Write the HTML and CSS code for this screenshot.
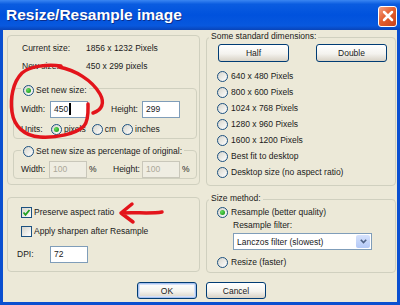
FILE: index.html
```html
<!DOCTYPE html>
<html lang="en">

<head>
    <meta charset="UTF-8">
    <meta name="viewport" content="width=device-width, initial-scale=1.0">
    <title>Resize/Resample image</title>
    <link rel="stylesheet" href="styles.css">
</head>

<body>
    <div class="window">
        <div class="title-bar">
            <span class="title">Resize/Resample image</span>
            <button class="close-btn">
                <svg width="12" height="12" viewBox="0 0 12 12"><path d="M2 2 L10 10 M10 2 L2 10" stroke="#fff" stroke-width="2.5" stroke-linecap="round"/></svg>
            </button>
        </div>

        <div class="client">
            <div class="columns">
                <div class="col-left">
                    <div class="group size-group">
                        <div class="info">
                            <span>Current size:</span><span>1856 x 1232 Pixels</span>
                            <span>New size:</span><span>450 x 299 pixels</span>
                        </div>

                        <fieldset class="sub new-size">
                            <legend><span class="radio checked"></span>Set new size:</legend>
                            <div class="field-row">
                                <span class="lbl-width">Width:</span>
                                <span class="field">450<span class="caret"></span></span>
                                <span class="lbl-height">Height:</span>
                                <span class="field">299</span>
                            </div>
                            <div class="units-row">
                                <span class="lbl-units">Units:</span>
                                <span class="opt"><span class="radio checked"></span>pixels</span>
                                <span class="opt"><span class="radio"></span>cm</span>
                                <span class="opt"><span class="radio"></span>inches</span>
                            </div>
                        </fieldset>

                        <fieldset class="sub percent">
                            <legend><span class="radio"></span>Set new size as percentage of original:</legend>
                            <div class="field-row">
                                <span class="lbl-width pct-width">Width:</span>
                                <span class="field disabled">100</span>
                                <span class="pct">%</span>
                                <span class="lbl-height pct-height">Height:</span>
                                <span class="field disabled">100</span>
                                <span class="pct">%</span>
                            </div>
                        </fieldset>
                    </div>

                    <div class="group options-group">
                        <div class="check-row">
                            <span class="check"><svg width="9" height="9" viewBox="0 0 9 9"><path d="M1.5 4.5 L3.5 6.8 L7.5 2" stroke="#21a121" stroke-width="1.8" fill="none"/></svg></span>
                            Preserve aspect ratio
                        </div>
                        <div class="check-row">
                            <span class="check"></span>
                            Apply sharpen after Resample
                        </div>
                        <div class="dpi-row">
                            <span class="lbl-dpi">DPI:</span>
                            <span class="field">72</span>
                        </div>
                    </div>
                </div>

                <div class="col-right">
                    <fieldset class="group std-group">
                        <legend>Some standard dimensions:</legend>
                        <div class="std-buttons">
                            <button class="btn wide">Half</button>
                            <button class="btn wide">Double</button>
                        </div>
                        <div class="std-list">
                            <div class="opt-row"><span class="radio"></span>640 x 480 Pixels</div>
                            <div class="opt-row"><span class="radio"></span>800 x 600 Pixels</div>
                            <div class="opt-row"><span class="radio"></span>1024 x 768 Pixels</div>
                            <div class="opt-row"><span class="radio"></span>1280 x 960 Pixels</div>
                            <div class="opt-row"><span class="radio"></span>1600 x 1200 Pixels</div>
                            <div class="opt-row"><span class="radio"></span>Best fit to desktop</div>
                            <div class="opt-row"><span class="radio"></span>Desktop size (no aspect ratio)</div>
                        </div>
                    </fieldset>

                    <fieldset class="group method-group">
                        <legend>Size method:</legend>
                        <div class="opt-row"><span class="radio checked"></span>Resample (better quality)</div>
                        <div class="filter-label">Resample filter:</div>
                        <div class="select">
                            <span>Lanczos filter (slowest)</span>
                            <span class="select-arrow"><svg width="7" height="5" viewBox="0 0 7 5"><path d="M0.8 0.8 L3.5 3.6 L6.2 0.8" stroke="#4d6185" stroke-width="1.6" fill="none"/></svg></span>
                        </div>
                        <div class="opt-row resize-row"><span class="radio"></span>Resize (faster)</div>
                    </fieldset>
                </div>
            </div>

            <div class="actions">
                <button class="btn default">OK</button>
                <button class="btn">Cancel</button>
            </div>
        </div>

        <!-- red marker scribbles drawn over the dialog -->
        <svg class="scribble" width="400" height="305" viewBox="0 0 400 305">
            <path d="M61 66 C48 64 30 66 22 73 C13 82 10 98 12 112 C14 126 24 136 40 137 C56 138 76 134 84 126 C89 120 88 110 88 104" />
            <path d="M59 67 C75 70 92 80 100 94 C105 103 102 110 93 113" />
            <path d="M162 212 C150 214 136 212 121 213 M132 204 L121 213 L133 222" />
        </svg>
    </div>
</body>

</html>
```

FILE: styles.css
```css
* {
    box-sizing: border-box;
}

body {
    margin: 0;
    font-family: "Liberation Sans", Arial, sans-serif;
    font-size: 8.5px;
    color: #1a1a1a;
}

.window {
    position: relative;
    width: 400px;
    height: 305px;
    background-color: #ece9d8;
    overflow: hidden;
}

/* title bar */
.title-bar {
    height: 30px;
    display: flex;
    align-items: center;
    justify-content: space-between;
    padding: 0 3px 0 6px;
    background: linear-gradient(#3a86f2 0%, #0a5ce0 14%, #0052dd 50%, #0858de 86%, #0944b8 100%);
}

.title {
    color: #fff;
    font-size: 15.5px;
    font-weight: bold;
    text-shadow: 1px 1px 0 #0b2e8c;
}

.close-btn {
    width: 19px;
    height: 21px;
    margin-top: 2px;
    padding: 0;
    border: 1px solid #fff;
    border-radius: 3px;
    background: linear-gradient(135deg, #f5a184 0%, #e4602f 45%, #c9421b 100%);
    display: flex;
    align-items: center;
    justify-content: center;
}

/* dialog body */
.client {
    height: 275px;
    border: 3px solid #0a4fd0;
    border-top: 0;
    padding: 0 1px 0 4px;
}

.columns {
    display: flex;
    gap: 6px;
    height: 244px;
}

.col-left {
    width: 193px;
    padding-top: 5px;
}

.col-right {
    width: 190px;
}

.group {
    border: 1px solid #d0d0bf;
    border-radius: 4px;
    margin: 0;
    min-width: 0;
}

.size-group {
    height: 150px;
    padding: 6px 2px 0 5px;
}

.info {
    display: grid;
    grid-template-columns: 64px auto;
    row-gap: 6px;
    padding-left: 9px;
    line-height: 12px;
}

.sub {
    border: 1px solid #d0d0bf;
    border-radius: 4px;
    margin: 0;
    min-width: 0;
    padding: 0 0 3px 7px;
}

.sub legend {
    display: flex;
    align-items: center;
    gap: 2px;
    line-height: 12px;
    padding: 4px 2px 0;
}

.new-size {
    margin-top: 8px;
}

.percent {
    margin-top: 4px;
    padding-bottom: 0;
}

.percent legend {
    padding-top: 2px;
}

.field-row {
    display: flex;
    align-items: center;
    height: 18px;
    margin-top: 4px;
}

.percent .field-row {
    margin-top: 3px;
}

.lbl-width {
    width: 29px;
}

.lbl-height {
    width: 31px;
    margin-left: 23px;
}

.pct-width {
    width: 28px;
}

.pct {
    width: 8px;
    margin-left: 2px;
}

.pct-height {
    width: 29px;
    margin-left: 16px;
}

.field {
    display: inline-flex;
    align-items: center;
    width: 38px;
    height: 17px;
    padding: 0 3px;
    border: 1px solid #7f9db9;
    background-color: #fff;
}

.field.disabled {
    border-color: #c9c7ba;
    background-color: #efede2;
    color: #aca899;
}

.caret {
    display: inline-block;
    width: 2px;
    height: 12px;
    margin-left: 1px;
    background-color: #000;
}

.units-row {
    display: flex;
    align-items: center;
    height: 12px;
    margin-top: 5px;
}

.lbl-units {
    width: 30px;
}

.opt {
    display: flex;
    align-items: center;
    gap: 2px;
    margin-right: 6px;
}

/* radio buttons and check boxes */
.radio {
    position: relative;
    flex: none;
    width: 11px;
    height: 11px;
    border: 1px solid #1c5180;
    border-radius: 50%;
    background: linear-gradient(135deg, #d6d5cc, #fff);
}

.radio.checked::after {
    content: "";
    position: absolute;
    inset: 2px;
    border-radius: 50%;
    background: radial-gradient(circle at 35% 35%, #66dd5f, #21a121 75%);
}

.check {
    display: flex;
    align-items: center;
    justify-content: center;
    flex: none;
    width: 11px;
    height: 11px;
    border: 1px solid #1c5180;
    background: linear-gradient(135deg, #d6d5cc, #fff);
}

.options-group {
    height: 75px;
    margin-top: 12px;
    padding: 8px 0 0 13px;
}

.check-row {
    display: flex;
    align-items: center;
    gap: 2px;
    height: 12px;
}

.check-row + .check-row {
    margin-top: 7px;
}

.dpi-row {
    display: flex;
    align-items: center;
    height: 18px;
    margin: 8px 0 0 -4px;
}

.lbl-dpi {
    width: 33px;
}

/* right column */
.col-right legend {
    line-height: 12px;
    padding: 0 2px 2px;
}

.std-group {
    height: 156px;
    padding: 0 2px;
}

.std-buttons {
    display: flex;
    gap: 27px;
    padding-left: 9px;
}

.btn {
    font: inherit;
    color: #1a1a1a;
    width: 60px;
    height: 17px;
    padding: 0;
    border: 1px solid #003c74;
    border-radius: 3px;
    background: linear-gradient(#fff, #f4f3ee 55%, #d8d2c6);
}

.btn.wide {
    width: 71px;
    height: 18px;
}

.btn.default {
    box-shadow: inset 0 0 0 1px #a8c2f0, inset 0 0 0 2px #d4e0f7;
}

.std-list {
    margin-top: 6px;
}

.opt-row {
    display: flex;
    align-items: center;
    gap: 3px;
    height: 16px;
    padding-left: 8px;
}

.method-group {
    margin-top: 6px;
    padding: 0 2px 4px;
}

.method-group .opt-row {
    height: 12px;
}

.filter-label {
    height: 12px;
    line-height: 12px;
    margin-top: 1px;
    padding-left: 24px;
}

.select {
    display: flex;
    align-items: center;
    justify-content: space-between;
    width: 139px;
    height: 17px;
    margin: 2px 0 0 24px;
    padding-left: 3px;
    border: 1px solid #7f9db9;
    background-color: #fff;
}

.select-arrow {
    display: flex;
    align-items: center;
    justify-content: center;
    width: 14px;
    height: 13px;
    margin-right: 1px;
    border-radius: 2px;
    background: linear-gradient(#d6e2fc, #b3c9f7);
}

.method-group .resize-row {
    margin-top: 6px;
}

.actions {
    display: flex;
    justify-content: center;
    gap: 9px;
    margin-top: 8px;
}

/* marker annotation */
.scribble {
    position: absolute;
    left: 0;
    top: 0;
    pointer-events: none;
}

.scribble path {
    fill: none;
    stroke: #e3141b;
    stroke-width: 3.5;
    stroke-linecap: round;
    stroke-linejoin: round;
}
```
